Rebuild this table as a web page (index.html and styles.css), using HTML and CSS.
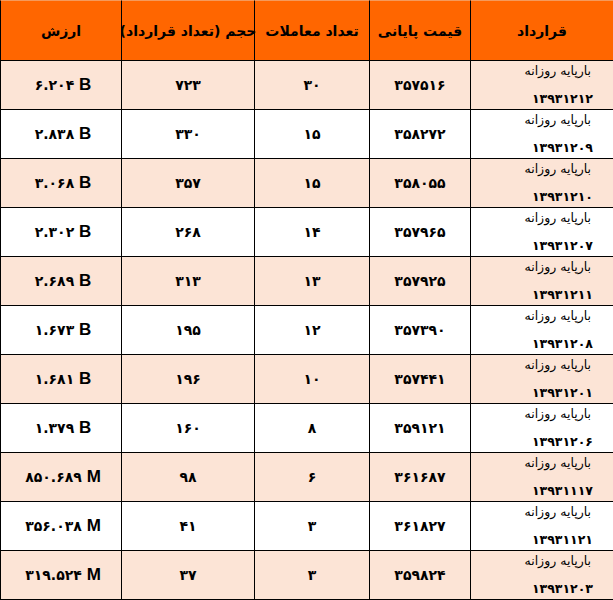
FILE: index.html
```html
<!DOCTYPE html>
<html lang="fa">
<head>
<meta charset="utf-8">
<title>جدول قراردادها</title>
<link rel="stylesheet" href="styles.css">
</head>
<body>
<div class="grid">
  <div class="cell head">قرارداد</div>
  <div class="cell head">قیمت پایانی</div>
  <div class="cell head">تعداد معاملات</div>
  <div class="cell head">حجم (تعداد قرارداد)</div>
  <div class="cell head">ارزش</div>

  <div class="cell tint contract"><div class="c-in"><div class="c-name">بارپایه روزانه</div><div class="c-num">۱۳۹۳۱۲۱۲</div></div></div>
  <div class="cell tint num">۳۵۷۵۱۶</div>
  <div class="cell tint num">۳۰</div>
  <div class="cell tint num">۷۲۳</div>
  <div class="cell tint num"><span class="val" dir="ltr">۶.۲۰۴ <b class="unit">B</b></span></div>

  <div class="cell contract"><div class="c-in"><div class="c-name">بارپایه روزانه</div><div class="c-num">۱۳۹۳۱۲۰۹</div></div></div>
  <div class="cell num">۳۵۸۲۷۲</div>
  <div class="cell num">۱۵</div>
  <div class="cell num">۳۳۰</div>
  <div class="cell num"><span class="val" dir="ltr">۲.۸۳۸ <b class="unit">B</b></span></div>

  <div class="cell tint contract"><div class="c-in"><div class="c-name">بارپایه روزانه</div><div class="c-num">۱۳۹۳۱۲۱۰</div></div></div>
  <div class="cell tint num">۳۵۸۰۵۵</div>
  <div class="cell tint num">۱۵</div>
  <div class="cell tint num">۳۵۷</div>
  <div class="cell tint num"><span class="val" dir="ltr">۳.۰۶۸ <b class="unit">B</b></span></div>

  <div class="cell contract"><div class="c-in"><div class="c-name">بارپایه روزانه</div><div class="c-num">۱۳۹۳۱۲۰۷</div></div></div>
  <div class="cell num">۳۵۷۹۶۵</div>
  <div class="cell num">۱۴</div>
  <div class="cell num">۲۶۸</div>
  <div class="cell num"><span class="val" dir="ltr">۲.۳۰۲ <b class="unit">B</b></span></div>

  <div class="cell tint contract"><div class="c-in"><div class="c-name">بارپایه روزانه</div><div class="c-num">۱۳۹۳۱۲۱۱</div></div></div>
  <div class="cell tint num">۳۵۷۹۲۵</div>
  <div class="cell tint num">۱۳</div>
  <div class="cell tint num">۳۱۳</div>
  <div class="cell tint num"><span class="val" dir="ltr">۲.۶۸۹ <b class="unit">B</b></span></div>

  <div class="cell contract"><div class="c-in"><div class="c-name">بارپایه روزانه</div><div class="c-num">۱۳۹۳۱۲۰۸</div></div></div>
  <div class="cell num">۳۵۷۳۹۰</div>
  <div class="cell num">۱۲</div>
  <div class="cell num">۱۹۵</div>
  <div class="cell num"><span class="val" dir="ltr">۱.۶۷۳ <b class="unit">B</b></span></div>

  <div class="cell tint contract"><div class="c-in"><div class="c-name">بارپایه روزانه</div><div class="c-num">۱۳۹۳۱۲۰۱</div></div></div>
  <div class="cell tint num">۳۵۷۴۴۱</div>
  <div class="cell tint num">۱۰</div>
  <div class="cell tint num">۱۹۶</div>
  <div class="cell tint num"><span class="val" dir="ltr">۱.۶۸۱ <b class="unit">B</b></span></div>

  <div class="cell contract"><div class="c-in"><div class="c-name">بارپایه روزانه</div><div class="c-num">۱۳۹۳۱۲۰۶</div></div></div>
  <div class="cell num">۳۵۹۱۲۱</div>
  <div class="cell num">۸</div>
  <div class="cell num">۱۶۰</div>
  <div class="cell num"><span class="val" dir="ltr">۱.۳۷۹ <b class="unit">B</b></span></div>

  <div class="cell tint contract"><div class="c-in"><div class="c-name">بارپایه روزانه</div><div class="c-num">۱۳۹۳۱۱۱۷</div></div></div>
  <div class="cell tint num">۳۶۱۶۸۷</div>
  <div class="cell tint num">۶</div>
  <div class="cell tint num">۹۸</div>
  <div class="cell tint num"><span class="val" dir="ltr">۸۵۰.۶۸۹ <b class="unit">M</b></span></div>

  <div class="cell contract"><div class="c-in"><div class="c-name">بارپایه روزانه</div><div class="c-num">۱۳۹۳۱۱۲۱</div></div></div>
  <div class="cell num">۳۶۱۸۲۷</div>
  <div class="cell num">۳</div>
  <div class="cell num">۴۱</div>
  <div class="cell num"><span class="val" dir="ltr">۳۵۶.۰۳۸ <b class="unit">M</b></span></div>

  <div class="cell tint contract"><div class="c-in"><div class="c-name">بارپایه روزانه</div><div class="c-num">۱۳۹۳۱۲۰۳</div></div></div>
  <div class="cell tint num">۳۵۹۸۲۴</div>
  <div class="cell tint num">۳</div>
  <div class="cell tint num">۳۷</div>
  <div class="cell tint num"><span class="val" dir="ltr">۳۱۹.۵۲۴ <b class="unit">M</b></span></div>
</div>
</body>
</html>
```
FILE: styles.css
```css
html, body {
  margin: 0;
  padding: 0;
  background: #ffffff;
}
body {
  width: 613px;
  height: 600px;
  overflow: hidden;
  font-family: "DejaVu Sans", "Noto Sans", sans-serif;
  color: #000;
}
.grid {
  display: grid;
  direction: rtl;
  grid-template-columns: 143px 101px 115px 133px 121px;
  grid-template-rows: 61px repeat(11, 49px);
  width: 613px;
}
.cell {
  box-sizing: border-box;
  border-left: 1px solid #000;
  border-bottom: 1px solid #000;
  display: flex;
  align-items: center;
  justify-content: center;
  background: #ffffff;
}
.head {
  background: #ff6600;
  font-weight: bold;
  font-size: 14px;
  white-space: nowrap;
  border-top: 1px solid #f59a5c;
}
.tint {
  background: #fce4d6;
}
.num {
  font-weight: bold;
  font-size: 14px;
}
.val {
  display: inline-block;
  padding-left: 4px;
  white-space: pre;
}
.unit {
  font-family: "Liberation Sans", Arial, sans-serif;
  font-weight: bold;
  font-size: 17px;
}
.c-in {
  width: 100%;
  height: 48px;
  box-sizing: border-box;
  padding-right: 22px;
  display: flex;
  flex-direction: column;
  justify-content: center;
  line-height: 28px;
}
.c-name {
  font-size: 12.5px;
  text-align: right;
}
.c-num {
  font-size: 12.5px;
  font-weight: bold;
  text-align: right;
  margin-right: -2px;
}
```
